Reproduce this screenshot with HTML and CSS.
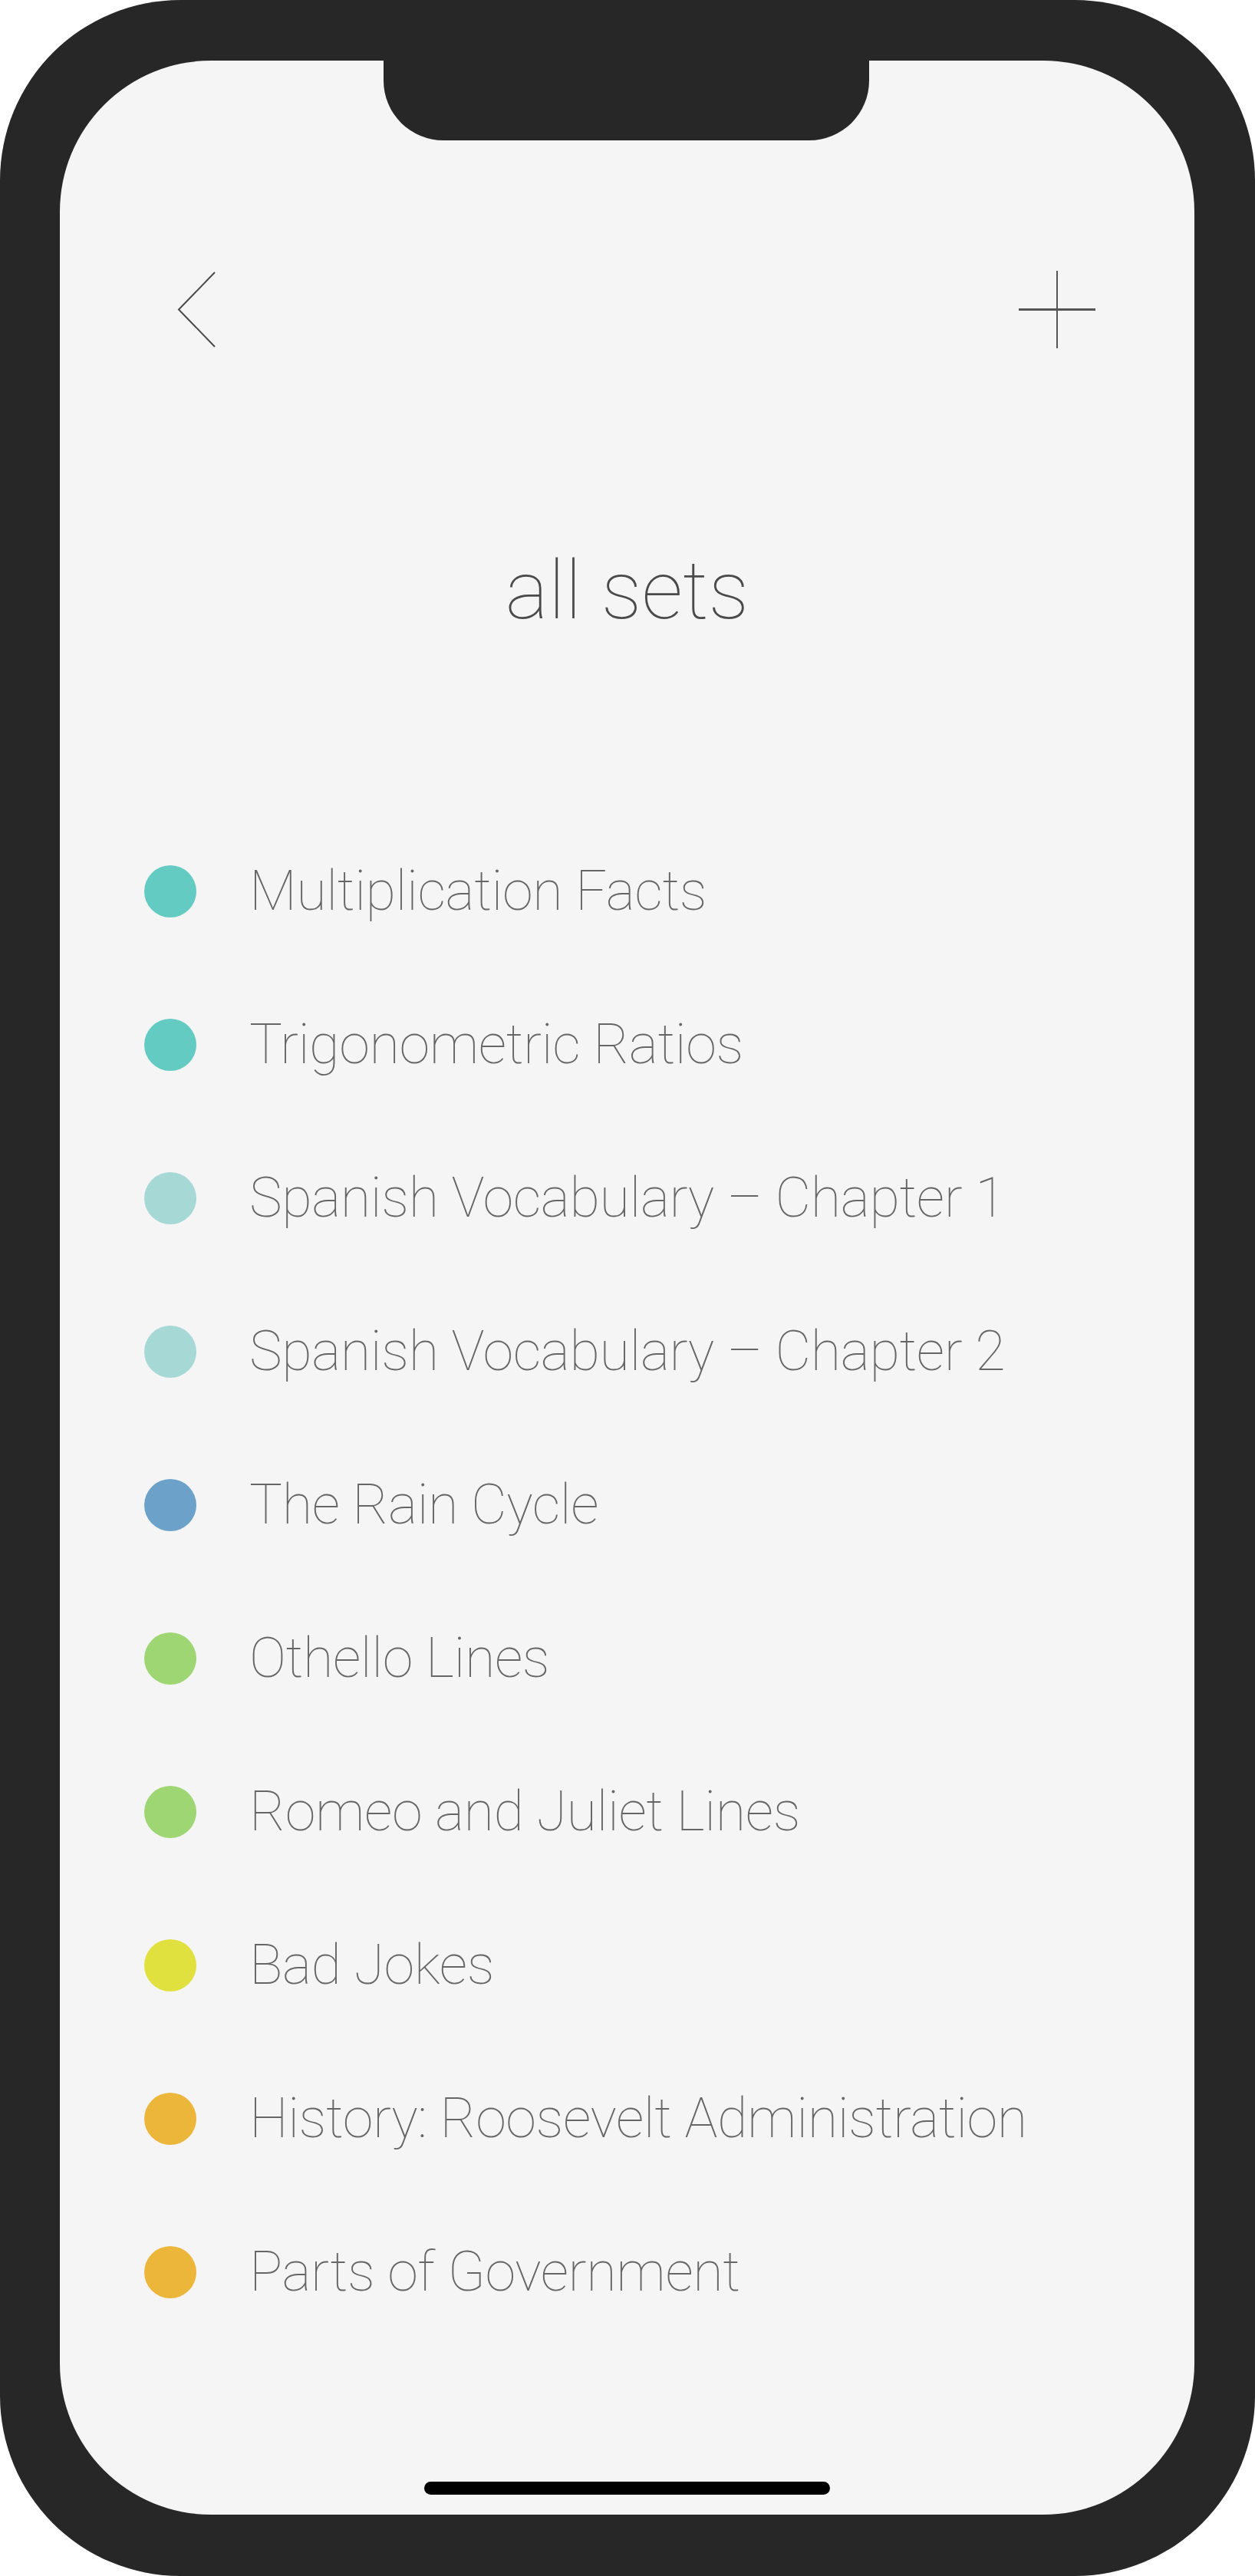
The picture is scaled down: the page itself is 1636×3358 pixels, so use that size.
FILE: index.html
```html
<!DOCTYPE html>
<html lang="en">
<head>
<meta charset="utf-8">
<title>all sets</title>
<link rel="stylesheet" href="styles.css">
</head>
<body>
<div class="phone">
  <div class="screen">
    <div class="notch"></div>
    <header class="topbar">
      <svg class="icon-back" width="52" height="101" viewBox="0 0 52 101">
        <polyline points="49,2 2,50.5 49,99" fill="none" stroke="#4a4a4a" stroke-width="2"/>
      </svg>
      <svg class="icon-plus" width="100" height="101" viewBox="0 0 100 101">
        <line x1="50" y1="0" x2="50" y2="101" stroke="#555" stroke-width="2"/>
        <line x1="0" y1="50.5" x2="100" y2="50.5" stroke="#555" stroke-width="3"/>
      </svg>
    </header>
    <h1 class="title">all sets</h1>
    <ul class="sets">
      <li class="set"><span class="dot teal"></span><span class="name">Multiplication Facts</span></li>
      <li class="set"><span class="dot teal"></span><span class="name">Trigonometric Ratios</span></li>
      <li class="set"><span class="dot lightteal"></span><span class="name">Spanish Vocabulary – Chapter 1</span></li>
      <li class="set"><span class="dot lightteal"></span><span class="name">Spanish Vocabulary – Chapter 2</span></li>
      <li class="set"><span class="dot blue"></span><span class="name">The Rain Cycle</span></li>
      <li class="set"><span class="dot green"></span><span class="name">Othello Lines</span></li>
      <li class="set"><span class="dot green"></span><span class="name">Romeo and Juliet Lines</span></li>
      <li class="set"><span class="dot yellow"></span><span class="name">Bad Jokes</span></li>
      <li class="set"><span class="dot orange"></span><span class="name">History: Roosevelt Administration</span></li>
      <li class="set"><span class="dot orange"></span><span class="name">Parts of Government</span></li>
    </ul>
    <div class="home-indicator"></div>
  </div>
</div>
</body>
</html>
```

FILE: styles.css
```css
html, body {
  margin: 0;
  padding: 0;
  background: #ffffff;
}

.phone {
  width: 1636px;
  height: 3358px;
  box-sizing: border-box;
  background: #272727;
  border-radius: 235px;
  padding: 79px 79px 80px 78px;
}

.screen {
  position: relative;
  width: 1479px;
  height: 3199px;
  background: #f5f5f5;
  border-radius: 197px;
  display: flex;
  flex-direction: column;
  font-family: Roboto, "Liberation Sans", sans-serif;
}

.notch {
  position: absolute;
  left: 422px;
  top: 0;
  width: 633px;
  height: 104px;
  background: #272727;
  border-radius: 0 0 78px 78px;
}

.topbar {
  display: flex;
  justify-content: space-between;
  align-items: center;
  padding: 274px 129px 0 153px;
  height: 101px;
}

.icon-back, .icon-plus {
  display: block;
}

.title {
  margin: 256px 0 0 0;
  text-align: center;
  font-size: 106px;
  line-height: 120px;
  font-weight: 100;
  color: #4a4a4a;
}

.sets {
  list-style: none;
  margin: 232px 0 0 0;
  padding: 0 0 0 110px;
}

.set {
  display: flex;
  align-items: center;
  height: 200px;
  gap: 69px;
}

.dot {
  width: 68px;
  height: 68px;
  border-radius: 50%;
  flex: none;
}

.teal { background: #64cbc3; }
.lightteal { background: #a6d8d6; }
.blue { background: #6ca2c9; }
.green { background: #9dd672; }
.yellow { background: #e0e03f; }
.orange { background: #ecb63a; }

.name {
  font-size: 72px;
  line-height: 72px;
  font-weight: 100;
  letter-spacing: -0.4px;
  color: #666666;
  white-space: nowrap;
}

.home-indicator {
  position: absolute;
  left: 475px;
  bottom: 26px;
  width: 529px;
  height: 17px;
  border-radius: 9px;
  background: #000;
}
```
